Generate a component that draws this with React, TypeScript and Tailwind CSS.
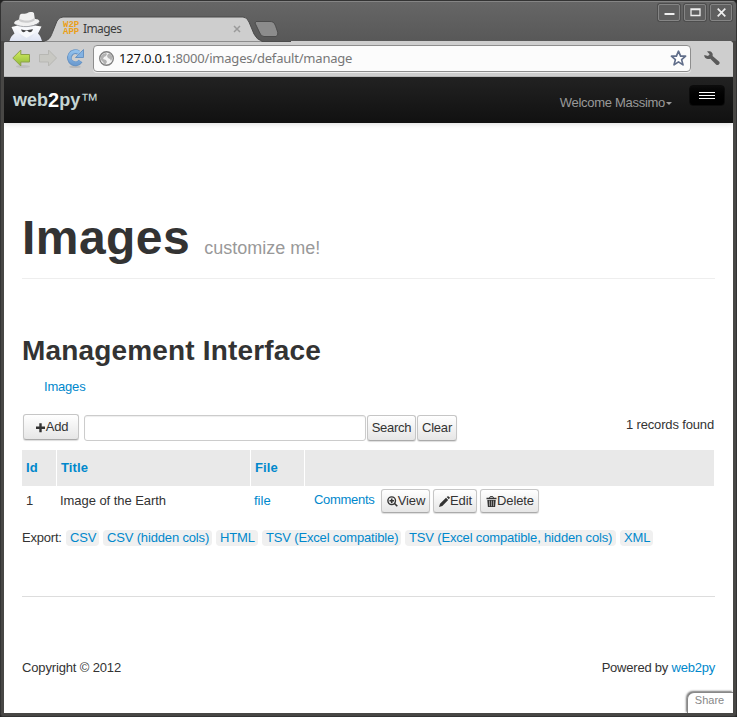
import React from "react";

const exportsList = [
  { label: "CSV", width: "w-[33px]" },
  { label: "CSV (hidden cols)", width: "w-[109px]" },
  { label: "HTML", width: "w-[42px]" },
  { label: "TSV (Excel compatible)", width: "w-[139px]" },
  { label: "TSV (Excel compatible, hidden cols)", width: "w-[211px]" },
  { label: "XML", width: "w-[33px]" },
];

function Incognito() {
  return (
    <svg className="ml-1 mt-[9px] h-[31px] w-[34px] shrink-0" viewBox="0 0 34 31">
      <defs>
        <linearGradient id="coat" x1="0" y1="0" x2="0" y2="1">
          <stop offset="0" stopColor="#ffffff" />
          <stop offset="1" stopColor="#dfe4f3" />
        </linearGradient>
      </defs>
      <path d="M.5 30C1.5 26 3 24.5 5.5 22.5L2.5 16 9 14.5 26 14.5 32.5 15.5 29 22.5C31.5 25 32 27 33 30Z" fill="url(#coat)" />
      <path d="M8.5 14.5C12 17 23 17 26.5 14.5L25.5 22 17.5 27 10 22Z" fill="#f8f9fc" />
      <path d="M10 22.5l7.5 4.5 8-4.5-5 7.5h-6Z" fill="#dfe4f0" opacity=".6" />
      <path d="M5.2 12.5C5 9.8 8.5 9.5 10 8.5L10.8 4C12 2 15 3.2 18 2.2C20 1 24.3 .5 25 2.3L25.8 8C28 8.2 30.4 8.5 30.4 10.7C27 15.5 9 17.5 5.2 12.5Z" fill="#f1f1f1" />
      <path d="M10.2 7.8C15 10.5 22 10 25.5 7L25.8 9.2C21 12.5 13 12.5 9.8 9.8Z" fill="#cdcdce" />
      <path d="M6 13.2C12 16.8 24 16.4 30 12" stroke="#8f9298" strokeWidth=".8" fill="none" />
      <path d="M12.2 18.2c2 .7 3.6 1 5.4 1 1.8 0 4-.5 6.2-1.2-.3 3.8-4.2 3.9-5.3 1.8h-1.7c-1 2.3-4.5 1.8-4.6-1.6Z" fill="#454546" />
    </svg>
  );
}

function WindowButton({ kind }: { kind: "min" | "max" | "close" }) {
  return (
    <div className="flex h-[17px] w-[22px] items-center justify-center rounded-[2px] border border-[#858585] bg-[#5f5f5f] shadow-[0_0_0_1px_#4d4d4d]">
      <svg className="h-[13px] w-[15px] shrink-0" viewBox="0 0 15 13">
        {kind === "min" && <rect x="2.5" y="7" width="10" height="2" rx=".5" fill="#eee" />}
        {kind === "max" && <path d="M3 3h9v6.5h-9ZM2.5 3.5h10" fill="none" stroke="#eee" strokeWidth="1.3" />}
        {kind === "close" && <path d="m3.7 2.7 7.6 7.6m0-7.6-7.6 7.6" fill="none" stroke="#eee" strokeWidth="1.7" />}
      </svg>
    </div>
  );
}

function TabStrip() {
  return (
    <div className="relative flex h-[40px] shrink-0 items-start border-t border-[#858585] bg-gradient-to-b from-[#666] to-[#585858] px-1">
      <svg className="absolute left-0 top-0 h-[40px] w-[290px]" viewBox="0 0 290 40">
        <path d="M43 39C49 38 50 34 52 29L56 19Q58 15 62 15H242Q246 15 248 20L253 32Q256 38 261 39V40H43Z" fill="#cecece" stroke="#4b4b4b" strokeWidth="1" />
        <path d="M255 19.5H269C274 19.5 274 23 276 28Q278 33 275 34.5H263Q260 34.5 258.8 31L254 21Z" fill="#8c8c8c" stroke="#4c4c4c" />
        <path d="M3 39.5H43M261 39.5h29" stroke="#4b4b4b" />
      </svg>
      <Incognito />
      <div className="relative ml-[20px] mt-[15px] flex h-[24px] w-[178px] items-center">
        <div className="w-[20px] font-['Liberation_Mono',monospace] text-[9px] font-bold text-[#eba018]"><div className="h-[7px] leading-[7px]">W2P</div><div className="h-[7px] leading-[7px]">APP</div></div>
        <span className="font-['Noto_Sans',sans-serif] text-[12px] tracking-[-.6px] text-[#3d3d3d]">Images</span>
        <svg className="ml-auto h-[8px] w-[8px]" viewBox="0 0 8 8"><path d="m1 1 6 6m0-6-6 6" stroke="#9a9a9a" strokeWidth="1.5" /></svg>
      </div>
      <div className="ml-auto mt-[2px] flex gap-[4px]">
        <WindowButton kind="min" /><WindowButton kind="max" /><WindowButton kind="close" />
      </div>
    </div>
  );
}

function Toolbar() {
  return (
    <div className="flex h-[36px] shrink-0 items-center border-b border-[#aaa] bg-[#cecece] pl-[8px] pr-[12px]">
      <svg className="h-[21px] w-[76px] shrink-0" viewBox="0 0 76 21">
        <defs>
          <linearGradient id="back" x1="0" y1="0" x2="0" y2="1"><stop stopColor="#d7f060" /><stop offset="1" stopColor="#8eb939" /></linearGradient>
          <linearGradient id="reload" x1="0" y1="0" x2="0" y2="1"><stop stopColor="#91c0ec" /><stop offset="1" stopColor="#6f9ed2" /></linearGradient>
        </defs>
        <ellipse cx="11" cy="18.5" rx="7" ry="1.5" fill="#999" opacity=".3" />
        <path d="m.8 10 8-8v4.5H17.5v7.5H8.8v4Z" fill="url(#back)" stroke="#8ca148" />
        <path d="m44.5 10-8-8v4.5h-9v7.5h9v4Z" fill="#c8c8c3" stroke="#b7b7b3" />
        <ellipse cx="63" cy="18.8" rx="6" ry="1.2" fill="#888" opacity=".3" />
        <path d="M66.5 4.6A6 6 0 1 0 68.5 13" fill="none" stroke="#6793c3" strokeWidth="4.8" />
        <path d="M71.5 1.5V9.5H63.5L66.2 7 68.8 4.2Z" fill="#83b2e2" stroke="#6793c3" />
        <path d="M67.5 5A6 6 0 1 0 68.2 13.2" fill="none" stroke="url(#reload)" strokeWidth="3.2" />
      </svg>
      <div className="ml-[5px] flex h-[27px] w-[598px] shrink-0 items-center rounded-[4px] border border-[#8e8e8e] bg-[#fcfcfc] pl-[5px] pr-[3px] shadow-[0_1px_0_#eee]">
        <svg className="h-[15px] w-[15px]" viewBox="0 0 15 15">
          <circle cx="7.5" cy="7.5" r="6.8" fill="#f4f4f4" stroke="#808080" strokeWidth="1.4" />
          <path d="m2 5 2-2 3-1 1 1-1 2-2 1-1 2 3 1 1 2-2 3-2-3-2-2ZM9 3l2-1 2 3v3l-1 2-1-2-2-1-1-2Z" fill="#b2b2b2" />
        </svg>
        <span className="relative top-[-1px] ml-[5px] whitespace-nowrap font-['Noto_Sans',sans-serif] text-[13px] tracking-[-.2px] text-[#777]"><span className="text-[#111]">127.0.0.1</span>:8000/images/default/manage</span>
        <svg className="ml-auto h-[17px] w-[17px]" viewBox="0 0 17 17"><path d="m8.5 1.2 2.1 5h5l-4 3.4 1.4 5.3-4.5-3-4.5 3 1.4-5.3-4-3.4h5Z" fill="#fff" stroke="#626f8b" strokeWidth="1.7" strokeLinejoin="round" /></svg>
      </div>
      <svg className="ml-auto h-[17px] w-[18px]" viewBox="0 0 18 17">
        <path d="M4 1.5C7.5.2 10.5 2.5 9.6 6L16 11.5c2 2-1 4.6-3 3l-5.7-5.7C4.5 9.8 1 8.2 1.3 5L5 6l1.7-1.8Z" fill="#5a5a5a" />
      </svg>
    </div>
  );
}

function Button({ children, className }: { children: React.ReactNode; className: string }) {
  return <button className={"flex items-center justify-center whitespace-nowrap rounded-[3px] border border-[#c6c6c6] border-b-[#aaa] bg-gradient-to-b from-white to-[#e6e6e6] text-[#333] shadow-[0_1px_1px_#ddd] " + className}>{children}</button>;
}

function ActionIcon({ kind }: { kind: "view" | "edit" | "delete" | "add" }) {
  return (
    <svg className="mt-[1px] h-[11px] w-[11px] shrink-0" viewBox="0 0 11 11">
      {kind === "add" && <path d="M5.5 1.3v9M1 5.8h9" stroke="#333" strokeWidth="2.4" />}
      {kind === "view" && <><circle cx="4.7" cy="4.7" r="3.8" fill="none" stroke="#333" strokeWidth="1.4" /><path d="m7.3 7.3 3 3M2.5 4.7H7M4.7 2.5v4.4" stroke="#333" strokeWidth="1.6" /></>}
      {kind === "edit" && <path d="M0 11 1 7.7 7 1.8l2.2 2.2-5.9 6ZM7.7 1.1 8.8.2Q10 0 11 1.8L9.8 3.2Z" fill="#333" />}
      {kind === "delete" && <><path d="M3.5 2 4.2.6h2.6L7.5 2" stroke="#333" strokeWidth="1" fill="none" /><path d="M.5 1.8h10v1.4H.5ZM1.3 4h8.4l-.6 7H1.9Z" fill="#333" /><path d="M3.5 4.6v5.6M5.5 4.6v5.6M7.5 4.6v5.6" stroke="#bbb" strokeWidth=".7" /></>}
    </svg>
  );
}

export default function App() {
  return (
    <div className="h-[717px] w-[737px] bg-[#222] font-['Liberation_Sans',Arial,sans-serif] text-[13px] leading-[20px] text-[#333]">
      <div className="flex h-full flex-col overflow-hidden rounded-t-[5px] rounded-b-[3px] border border-[#333] bg-[#484745]">
        <TabStrip />
        <div className="mx-[3px] flex h-[672px] shrink-0 flex-col overflow-hidden rounded-t-[4px] bg-white">
          <Toolbar />
          <nav className="flex h-[46px] shrink-0 items-start bg-gradient-to-b from-[#222] to-[#111] shadow-[0_1px_5px_#ddd]">
            <div className="ml-[9px] mt-[13px] flex items-center text-[18px] font-bold leading-[20px] text-[#c5d5d3]">web<span className="text-[20px] text-white">2</span>py<span className="font-normal">™</span></div>
            <div className="ml-auto mt-[16px] flex items-center whitespace-nowrap text-[#999]"><span className="tracking-[-.29px]">Welcome Massimo</span><span className="ml-[1px] border-x-[3px] border-t-[3px] border-x-transparent border-t-[#999]" /></div>
            <button className="ml-[17px] mr-[8px] mt-[8px] flex h-[21px] w-[36px] flex-col items-center justify-center gap-[2px] rounded-[4px] border border-[#0c0c0c] bg-gradient-to-b from-[#0c0c0c] to-black"><span className="h-[1px] w-[16px] bg-white" /><span className="h-[1px] w-[16px] bg-white" /><span className="h-[1px] w-[16px] bg-white" /></button>
          </nav>
          <main className="relative flex-1 px-[18px] pt-[91px]">
            <header className="flex h-[65px] items-baseline border-b border-[#eee]">
              <h1 className="text-[48px] font-bold leading-[48px] tracking-[.45px]">Images</h1>
              <span className="ml-[14px] text-[18px] text-[#999]">customize me!</span>
            </header>
            <h2 className="mt-[58px] text-[28px] font-bold leading-[28px] tracking-[.17px]">Management Interface</h2>
            <a className="ml-[22px] mt-[12px] block tracking-[-.2px] text-[#0088cc]">Images</a>
            <div className="mt-[17px] flex h-[28px] items-start">
              <Button className="ml-[1px] h-[26px] w-[56px] pl-[1px] tracking-[-.2px]"><ActionIcon kind="add" />Add</Button>
              <input className="ml-[5px] mt-[1px] h-[26px] w-[282px] rounded-[3px] border border-[#ccc] bg-white shadow-[inset_0_1px_1px_#eee] outline-none" />
              <Button className="ml-[1px] mt-[1px] h-[26px] w-[49px] tracking-[-.25px]">Search</Button>
              <Button className="ml-[1px] mt-[1px] h-[26px] w-[40px] tracking-[-.2px]">Clear</Button>
              <span className="ml-auto mr-[1px] mt-[1px] tracking-[-.15px]">1 records found</span>
            </div>
            <div className="mt-[8px] grid h-[36px] w-[692px] grid-cols-[34px_193px_53px_409px] gap-[1px] font-bold tracking-[.1px] text-[#0088cc]">
              <div className="flex items-center bg-[#e9e9e9] pl-[4px]">Id</div><div className="flex items-center bg-[#e9e9e9] pl-[4px]">Title</div><div className="flex items-center bg-[#e9e9e9] pl-[4px]">File</div><div className="bg-[#e9e9e9]" />
            </div>
            <div className="grid h-[30px] grid-cols-[35px_194px_54px_410px] items-center">
              <span className="pl-[4px]">1</span><span className="pl-[3px] tracking-[-.05px]">Image of the Earth</span><a className="pl-[3px] text-[#0088cc]">file</a>
              <div className="flex items-center pl-[9px]">
                <a className="mb-[2px] w-[67px] tracking-[-.3px] text-[#0088cc]">Comments</a>
                <Button className="h-[24px] w-[49px] pl-[1px] tracking-[-.1px]"><ActionIcon kind="view" />View</Button>
                <Button className="ml-[3px] h-[24px] w-[44px] pl-[1px] tracking-[-.1px]"><ActionIcon kind="edit" />Edit</Button>
                <Button className="ml-[3px] h-[24px] w-[59px] pl-[1px] tracking-[-.1px]"><ActionIcon kind="delete" />Delete</Button>
              </div>
            </div>
            <div className="mt-[12px] flex items-center">
              <span className="mr-[4px] w-[40px] whitespace-nowrap tracking-[-.2px]">Export:</span>
              <div className="flex gap-[4px]">
                {exportsList.map(({ label, width }) => <a key={label} className={"flex h-[16px] shrink-0 items-center whitespace-nowrap rounded-[4px] bg-[#f0f0f0] pl-[4px] tracking-[-.16px] text-[#0088cc] " + width}>{label}</a>)}
              </div>
            </div>
            <footer className="mt-[48px] flex justify-between border-t border-[#ddd] pt-[61px]">
              <span className="tracking-[-.15px]">Copyright © 2012</span><span className="tracking-[-.22px]">Powered by <a className="text-[#0088cc]">web2py</a></span>
            </footer>
            <div className="absolute bottom-0 right-0 flex h-[21px] w-[46px] justify-center rounded-tl-[7px] border-l border-t border-[#888] bg-white pr-[2px] text-[11px] leading-[15px] text-[#888] shadow-[-1px_-1px_2px_#777]">Share</div>
          </main>
        </div>
      </div>
    </div>
  );
}
